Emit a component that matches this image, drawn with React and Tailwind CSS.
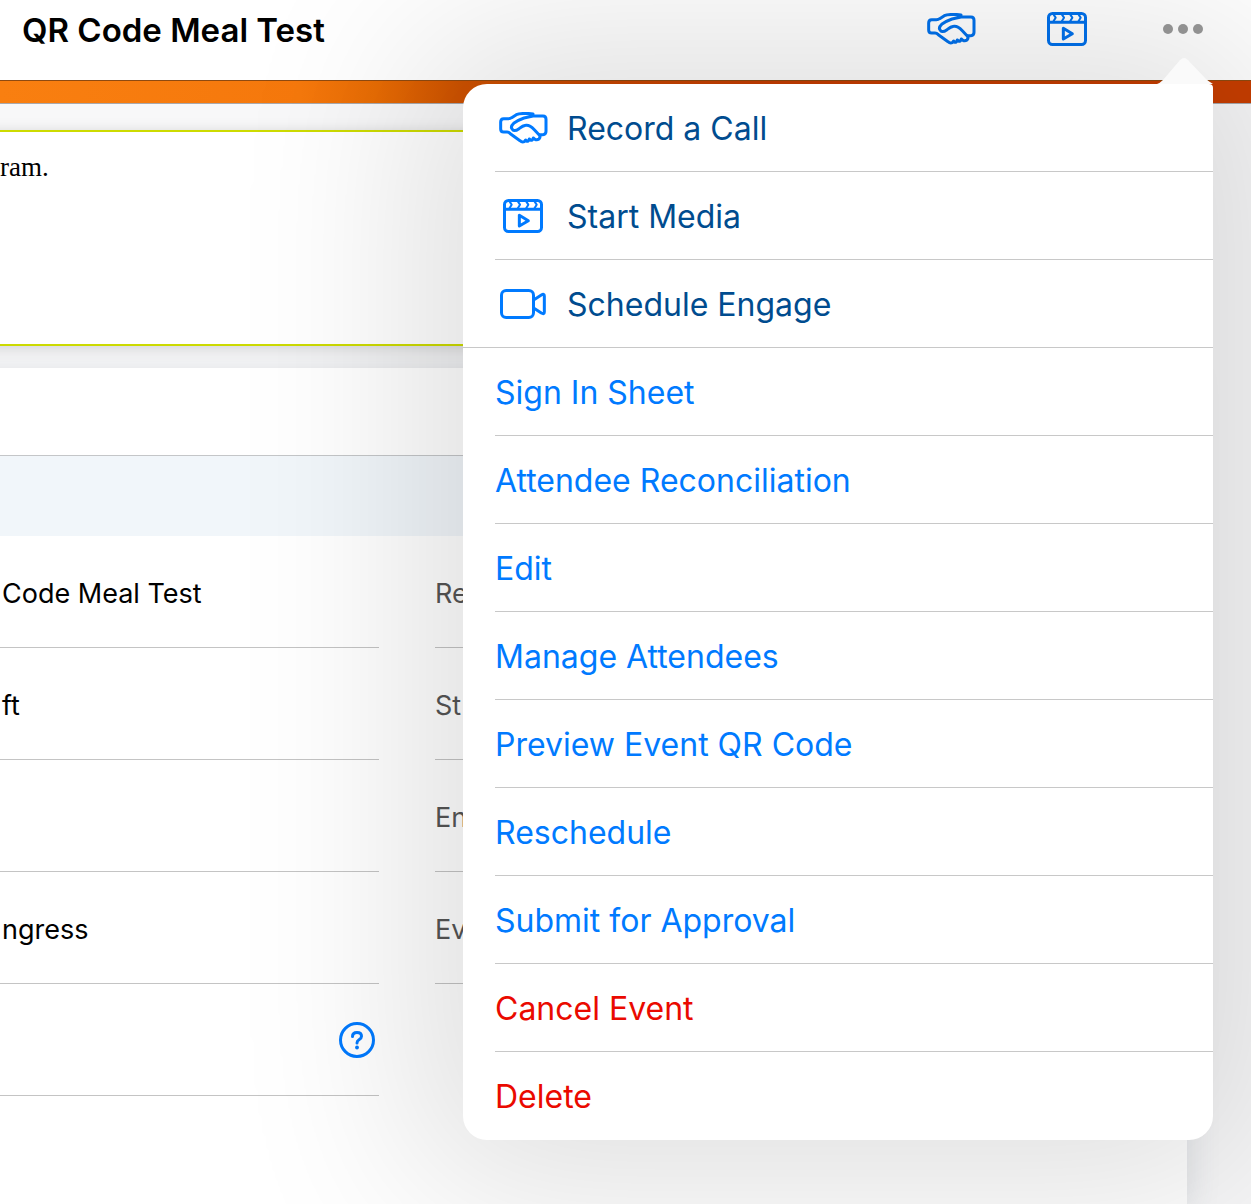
import React from 'react';

// Event detail page with the actions menu open

const details = [
  { value: 'Code Meal Test', next: 'Re' },
  { value: 'ft', next: 'St' },
  { value: '', next: 'En' },
  { value: 'ngress', next: 'Ev' },
];

const HandshakeIcon = () => (
  <svg width="49" height="32" viewBox="0 0 147 96" fill="none" stroke="currentColor" strokeWidth="9" strokeLinecap="round" strokeLinejoin="round" aria-hidden="true">
    <path d="M102 6C85 3 60 4 52 8L38 17Q34 20 28 20H14Q5 20 5 30V51Q5 60 14 60H24Q29 60 34 65L63 86Q69 92 76 89L80 84L84 88Q89 88 91 81L96 85Q101 85 103 78L108 82Q114 85 120 81Q126 74 120 68L106 53Q92 38 80 40Q72 41 60 50Q46 60 40 52Q33 44 44 34Q60 23 75 18L102 12H132Q141 12 141 22V58Q141 68 132 68H122" />
  </svg>
);

const MediaIcon = () => (
  <svg width="40" height="34" viewBox="0 0 120 102" fill="none" stroke="currentColor" strokeWidth="9" strokeLinejoin="round" aria-hidden="true">
    <rect x="4.5" y="4.5" width="111" height="93" rx="12" />
    <path d="M4 31H116" />
    <path strokeWidth="6" d="M18 5L26 17L18 30M43 5L51 17L43 30M68 5L76 17L68 30M93 5L101 17L93 30" />
    <path d="M49 49V81L76 65Z" />
  </svg>
);

const VideoIcon = () => (
  <svg width="46" height="30" viewBox="0 0 138 90" fill="none" stroke="currentColor" strokeWidth="9" strokeLinejoin="round" aria-hidden="true">
    <rect x="4.5" y="4.5" width="96" height="81" rx="14" />
    <path d="M102 32L124 18Q133 13 133 21V69Q133 77 124 72L102 58" />
  </svg>
);

const HelpIcon = () => (
  <svg width="36" height="36" viewBox="0 0 36 36" fill="none" stroke="currentColor" strokeWidth="3" strokeLinecap="round" aria-hidden="true">
    <circle cx="18" cy="18" r="16.5" />
    <path d="M13.5 14.5Q13.5 10.5 18 10.5Q22.5 10.5 22.5 14.3Q22.5 16.3 20 17.8Q18 19 18 21" />
    <circle cx="18" cy="25.5" r="1.9" fill="currentColor" stroke="none" />
  </svg>
);

const actions = [
  { label: 'Record a Call', icon: HandshakeIcon },
  { label: 'Start Media', icon: MediaIcon },
  { label: 'Schedule Engage', icon: VideoIcon, last: true },
  { label: 'Sign In Sheet' },
  { label: 'Attendee Reconciliation' },
  { label: 'Edit' },
  { label: 'Manage Attendees' },
  { label: 'Preview Event QR Code' },
  { label: 'Reschedule' },
  { label: 'Submit for Approval' },
  { label: 'Cancel Event', danger: true },
  { label: 'Delete', danger: true },
];

function textColor(action) {
  if (action.danger) return 'text-[#ea0a00]';
  return action.icon ? 'text-[#004c8f]' : 'text-[#007aff]';
}

function ActionRow({ action }) {
  const Icon = action.icon;
  return (
    <li className={action.last ? 'border-b border-[#c8c8c8]' : 'ml-8 border-b border-[#c8c8c8] last:border-transparent'}>
      <button type="button" className={`flex h-[87px] w-full items-center text-left text-[32px] ${action.last ? 'pl-8' : ''} ${textColor(action)}`}>
        {Icon && (
          <span className="mr-4 flex w-14 justify-center text-[#007aff]">
            <Icon />
          </span>
        )}
        <span className="pt-0.5">{action.label}</span>
      </button>
    </li>
  );
}

function ActionsMenu() {
  return (
    <div className="absolute top-[84px] right-[38px] w-[750px] rounded-3xl rounded-tr-sm bg-white shadow-[0_0_180px_50px_rgba(10,10,0,0.125)]">
      <svg className="absolute right-0 bottom-full" width="56" height="27" viewBox="0 0 56 27" fill="#fafafa" aria-hidden="true">
        <path d="M0 27Q3 26 6 23L23 3Q27 -1 31 3L49 22Q51 24 56 27Z" />
      </svg>
      <ul>
        {actions.map((action) => (
          <ActionRow key={action.label} action={action} />
        ))}
      </ul>
    </div>
  );
}

export default function App() {
  return (
    <div className="relative flex min-h-screen flex-col overflow-hidden bg-[#f8f8f9] font-['Inter',sans-serif] text-black">
      <header className="flex h-[81px] items-start justify-between border-b border-[#8f4a10] bg-white pr-12 pl-[22px]">
        <h1 className="pt-2 text-[33px] leading-11 font-semibold">QR Code Meal Test</h1>
        <div className="flex h-[57px] items-center gap-[71px] text-[#0071ec]">
          <button type="button" aria-label="Record a call"><HandshakeIcon /></button>
          <button type="button" aria-label="Start media"><MediaIcon /></button>
          <button type="button" aria-label="More actions" className="ml-[5px] flex gap-[5px]">
            <span className="size-[10px] rounded-full bg-[#999]" />
            <span className="size-[10px] rounded-full bg-[#999]" />
            <span className="size-[10px] rounded-full bg-[#999]" />
          </button>
        </div>
      </header>
      <div className="h-[23px] border-b border-[#a9a9ad] bg-[linear-gradient(90deg,#f97f10,#f5780c_24%,#e86c04_30%,#cf5200_37%,#c83e00_60%)]" />

      <main className="flex flex-1 flex-col gap-[22px] pt-[26px] pr-16">
        <section className="-ml-10 h-[216px] border-y-2 border-[#cddb00] bg-white pt-[19px] pl-10 shadow-[0_2px_14px_rgba(0,0,0,0.15)]">
          <p className="font-['Liberation_Serif',serif] text-[27px] leading-8">ram.</p>
        </section>

        <section className="-ml-10 flex-1 bg-white pl-10 shadow-[0_4px_32px_rgba(60,80,100,0.15)]">
          <div className="-ml-10 h-[88px] border-b border-[#c4c6c8]" />
          <div className="-ml-10 h-20 bg-[#f1f6fa]" />
          <div className="flex gap-14">
            <div className="w-[379px]">
              {details.map((row) => (
                <div key={row.next} className="h-28 border-b border-[#c4c4c4] pt-10 pl-0.5">
                  <p className="text-[27px] leading-9">{row.value}</p>
                </div>
              ))}
              <div className="flex h-28 items-center justify-end border-b border-[#c4c4c4] pr-1">
                <button type="button" aria-label="Help" className="text-[#007aff]"><HelpIcon /></button>
              </div>
            </div>
            <div className="flex-1">
              {details.map((row) => (
                <p key={row.next} className="h-28 border-b border-[#c4c4c4] pt-10 text-[27px] leading-9 text-[#555]">{row.next}</p>
              ))}
            </div>
          </div>
        </section>
      </main>

      <ActionsMenu />
    </div>
  );
}
